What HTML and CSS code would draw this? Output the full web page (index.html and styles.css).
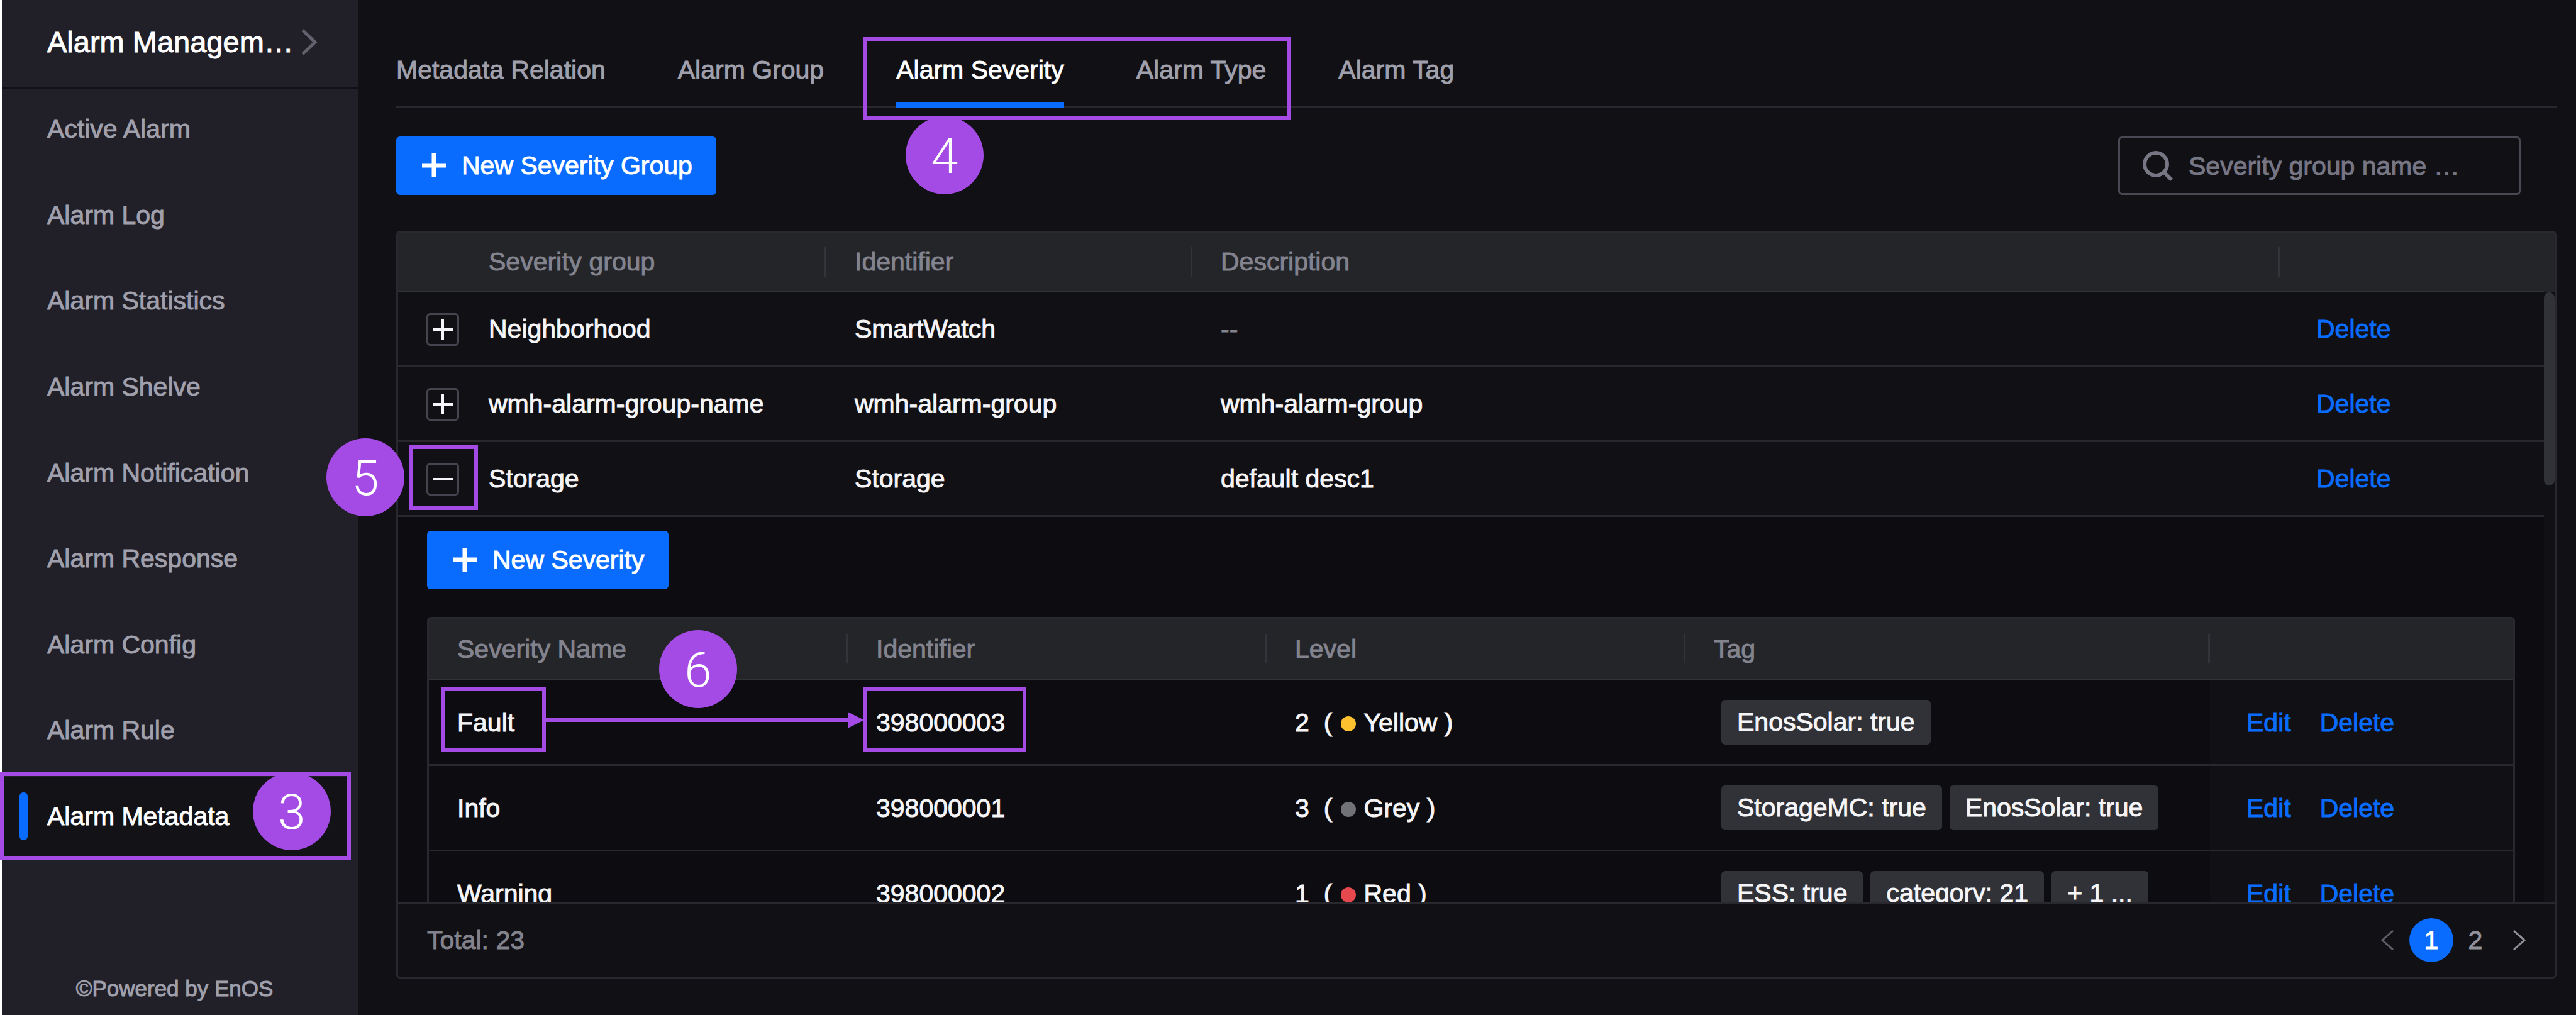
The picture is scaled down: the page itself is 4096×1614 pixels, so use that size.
FILE: index.html
```html
<!DOCTYPE html>
<html lang="en">
<head>
<meta charset="utf-8">
<meta name="viewport" content="width=device-width, initial-scale=1.0">
<title>Alarm Metadata - Alarm Management</title>
<link rel="stylesheet" href="styles.css">
</head>
<body>
<aside class="sidebar">
  <div class="sidebar-title">
    <span>Alarm Managem…</span>
    <svg class="title-arrow" viewBox="0 0 26 42"><path d="M2 2 L22 21 L2 40"/></svg>
  </div>
  <nav class="menu">
    <a href="#">Active Alarm</a>
    <a href="#">Alarm Log</a>
    <a href="#">Alarm Statistics</a>
    <a href="#">Alarm Shelve</a>
    <a href="#">Alarm Notification</a>
    <a href="#">Alarm Response</a>
    <a href="#">Alarm Config</a>
    <a href="#">Alarm Rule</a>
    <a href="#" class="active">Alarm Metadata</a>
  </nav>
  <p class="powered">©Powered by EnOS</p>
</aside>

<main class="content">
  <nav class="tabs">
    <a href="#">Metadata Relation</a>
    <a href="#">Alarm Group</a>
    <a href="#" class="active">Alarm Severity</a>
    <a href="#">Alarm Type</a>
    <a href="#">Alarm Tag</a>
  </nav>

  <div class="toolbar">
    <button class="btn" type="button">
      <svg class="plus" viewBox="0 0 38 38"><path d="M19 0 V38 M0 19 H38"/></svg>
      New Severity Group
    </button>
    <label class="search">
      <svg class="search-icon" viewBox="0 0 48 48"><circle cx="21" cy="21" r="18"/><path d="M34 34 L46 46"/></svg>
      <input type="text" placeholder="Severity group name …" aria-label="Severity group name">
    </label>
  </div>

  <section class="card">
    <div class="card-head">
      <table class="grid groups">
        <colgroup><col class="c-expand"><col class="c-group"><col class="c-ident"><col><col class="c-ops"></colgroup>
        <thead>
          <tr><th></th><th class="split">Severity group</th><th class="split">Identifier</th><th class="split">Description</th><th></th></tr>
        </thead>
      </table>
    </div>
    <div class="card-body">
      <table class="grid groups">
        <colgroup><col class="c-expand"><col class="c-group"><col class="c-ident"><col><col class="c-ops"></colgroup>
        <tbody>
          <tr>
            <td><button class="expand" type="button" aria-label="Expand"><svg viewBox="0 0 32 32"><path d="M16 0 V32 M0 16 H32"/></svg></button></td>
            <td>Neighborhood</td>
            <td>SmartWatch</td>
            <td class="empty">--</td>
            <td class="ops"><a href="#">Delete</a></td>
          </tr>
          <tr>
            <td><button class="expand" type="button" aria-label="Expand"><svg viewBox="0 0 32 32"><path d="M16 0 V32 M0 16 H32"/></svg></button></td>
            <td>wmh-alarm-group-name</td>
            <td>wmh-alarm-group</td>
            <td>wmh-alarm-group</td>
            <td class="ops"><a href="#">Delete</a></td>
          </tr>
          <tr>
            <td><button class="expand" type="button" aria-label="Collapse"><svg viewBox="0 0 32 32"><path d="M0 16 H32"/></svg></button></td>
            <td>Storage</td>
            <td>Storage</td>
            <td>default desc1</td>
            <td class="ops"><a href="#">Delete</a></td>
          </tr>
          <tr>
            <td colspan="5" class="detail">
              <button class="btn" type="button">
                <svg class="plus" viewBox="0 0 38 38"><path d="M19 0 V38 M0 19 H38"/></svg>
                New Severity
              </button>
              <table class="grid severities">
                <colgroup><col><col><col><col class="c-tag"><col class="c-edit"></colgroup>
                <thead>
                  <tr><th class="split">Severity Name</th><th class="split">Identifier</th><th class="split">Level</th><th class="split">Tag</th><th></th></tr>
                </thead>
                <tbody>
                  <tr>
                    <td>Fault</td>
                    <td>398000003</td>
                    <td><span class="level">2</span>(<i class="dot yellow"></i>Yellow )</td>
                    <td><div class="tags"><span>EnosSolar: true</span></div></td>
                    <td class="ops"><a href="#">Edit</a><a href="#">Delete</a></td>
                  </tr>
                  <tr>
                    <td>Info</td>
                    <td>398000001</td>
                    <td><span class="level">3</span>(<i class="dot grey"></i>Grey )</td>
                    <td><div class="tags"><span>StorageMC: true</span><span>EnosSolar: true</span></div></td>
                    <td class="ops"><a href="#">Edit</a><a href="#">Delete</a></td>
                  </tr>
                  <tr>
                    <td>Warning</td>
                    <td>398000002</td>
                    <td><span class="level">1</span>(<i class="dot red"></i>Red )</td>
                    <td><div class="tags"><span>ESS: true</span><span>category: 21</span><span>+ 1 ...</span></div></td>
                    <td class="ops"><a href="#">Edit</a><a href="#">Delete</a></td>
                  </tr>
                </tbody>
              </table>
            </td>
          </tr>
        </tbody>
      </table>
      <div class="scrollbar"></div>
    </div>
    <div class="card-foot">
      <span>Total: 23</span>
      <div class="pager">
        <button type="button" class="prev" aria-label="Previous page"><svg viewBox="0 0 20 32"><path d="M19 1 L2 16 L19 31"/></svg></button>
        <button type="button" class="current">1</button>
        <button type="button">2</button>
        <button type="button" aria-label="Next page"><svg viewBox="0 0 20 32"><path d="M1 1 L18 16 L1 31"/></svg></button>
      </div>
    </div>
  </section>
</main>

<!-- step markers on top of the page -->
<div class="steps">
  <div class="frame frame-menu"></div>
  <div class="frame frame-tabs"></div>
  <div class="frame frame-expand"></div>
  <div class="frame frame-name"></div>
  <div class="frame frame-ident"></div>
  <svg class="arrow" viewBox="0 0 508 26"><path d="M0 10 H482 V0 L508 13 L482 26 V16 H0 Z"/></svg>
  <span class="step step-3">3</span>
  <span class="step step-4">4</span>
  <span class="step step-5">5</span>
  <span class="step step-6">6</span>
</div>
</body>
</html>
```
FILE: styles.css
```css
* {
  box-sizing: border-box;
}

body {
  margin: 0;
  height: 100vh;
  display: flex;
  position: relative;
  overflow: hidden;
  background: #111014;
  color: #f5f5f7;
  font-family: "Liberation Sans", Arial, sans-serif;
  font-size: 41px;
  line-height: 48px;
  -webkit-text-stroke: 1px;
}

a {
  color: #0a6cff;
  text-decoration: none;
}

button,
input {
  font: inherit;
  color: inherit;
}

svg {
  display: block;
  fill: none;
  stroke: currentColor;
}

/* sidebar */
.sidebar {
  width: 569px;
  flex: none;
  display: flex;
  flex-direction: column;
  background: #211f28;
  border-left: 3px solid #fff;
}

.sidebar-title {
  height: 142px;
  padding: 0 64px 6px 72px;
  display: flex;
  align-items: center;
  justify-content: space-between;
  border-bottom: 3px solid #111014;
  color: #fff;
  font-size: 47px;
}

.title-arrow {
  width: 26px;
  height: 42px;
  stroke-width: 5;
  color: #62616d;
}

.menu {
  display: flex;
  flex-direction: column;
  justify-content: space-between;
  flex: 1;
}

.menu a {
  display: flex;
  align-items: center;
  height: 126px;
  margin-right: 14px;
  padding-left: 72px;
  color: #a0a0ac;
}

.menu a.active {
  padding-left: 28px;
  gap: 31px;
  background: #131217;
  color: #fff;
}

.menu a.active::before {
  content: "";
  width: 13px;
  height: 76px;
  border-radius: 6px;
  background: #0a6cff;
}

.powered {
  height: 253px;
  margin: 0;
  padding: 187px 17px 0 0;
  text-align: center;
  font-size: 35px;
  color: #a0a0ac;
}

/* content */
.content {
  flex: 1;
  min-width: 0;
  display: flex;
  flex-direction: column;
  padding: 0 31px 58px 61px;
}

.tabs {
  display: flex;
  gap: 115px;
  height: 171px;
  border-bottom: 3px solid #28282e;
}

.tabs a {
  height: 171px;
  padding-top: 87px;
  color: #a0a0ac;
}

.tabs a.active {
  color: #fff;
  border-bottom: 9px solid #0a6cff;
}

.toolbar {
  display: flex;
  justify-content: space-between;
  padding: 46px 57px 57px 0;
}

.btn {
  display: flex;
  align-items: center;
  gap: 25px;
  height: 93px;
  padding: 0 38px 2px 41px;
  border: 0;
  border-radius: 6px;
  background: #0a6cff;
  color: #fff;
}

.plus {
  width: 38px;
  height: 38px;
  stroke-width: 7;
}

.search {
  display: flex;
  align-items: center;
  gap: 25px;
  width: 640px;
  height: 93px;
  padding: 0 36px;
  border: 3px solid #4a4953;
  border-radius: 6px;
  color: #777684;
}

.search-icon {
  width: 48px;
  height: 48px;
  flex: none;
  stroke-width: 6;
}

.search input {
  flex: 1;
  min-width: 0;
  padding: 0;
  border: 0;
  outline: 0;
  background: none;
}

.search input::placeholder {
  color: #777684;
  opacity: 1;
}

/* table card */
.card {
  flex: 1;
  min-height: 0;
  display: flex;
  flex-direction: column;
  border: 3px solid #28282e;
  border-radius: 6px;
}

.card-head {
  padding-right: 17px;
  background: #242529;
}

.card-body {
  flex: 1;
  min-height: 0;
  padding-right: 17px;
  position: relative;
  overflow: hidden;
}

.scrollbar {
  position: absolute;
  top: 0;
  right: 0;
  width: 17px;
  height: 307px;
  border-radius: 9px;
  background: #313237;
}

.grid {
  width: 100%;
  table-layout: fixed;
  border-collapse: separate;
  border-spacing: 0;
}

.grid th,
.grid td {
  padding: 0 45px;
  text-align: left;
  font-weight: 400;
  white-space: nowrap;
  border-bottom: 3px solid #28282e;
}

.grid th {
  height: 95px;
  background: #242529;
  color: #83838e;
  border-bottom-color: #313238;
}

.grid th.split {
  background: linear-gradient(#33343a, #33343a) right center / 3px 47px no-repeat #242529;
}

.grid td {
  height: 119px;
}

.grid .empty {
  color: #83838e;
}

.grid .ops {
  padding: 0 58px;
}

.ops a + a {
  margin-left: 46px;
}

.groups .c-expand {
  width: 99px;
}

.groups .c-group,
.groups .c-ident {
  width: 582px;
}

.groups .c-ops {
  width: 420px;
}

.expand {
  display: flex;
  align-items: center;
  justify-content: center;
  width: 52px;
  height: 52px;
  padding: 0;
  border: 3px solid #46454f;
  border-radius: 6px;
  background: none;
}

.expand svg {
  width: 32px;
  height: 32px;
  stroke-width: 4;
}

.groups td:has(.expand) {
  padding: 2px 0 0 45px;
}

/* expanded row */
.grid .detail {
  padding: 22px 46px 46px;
  background: #0d0c10;
}

.severities {
  margin-top: 44px;
  border: 3px solid #28282e;
  border-radius: 6px;
}

.grid.severities th {
  height: 98px;
}

.grid.severities td {
  height: 136px;
}

.severities .c-tag {
  width: 834px;
}

.severities .c-edit {
  width: 482px;
}

.severities .ops {
  background: #111014;
}

.level {
  margin-right: 23px;
}

.dot {
  display: inline-block;
  width: 24px;
  height: 24px;
  margin: 0 12px 0 14px;
  border-radius: 50%;
}

.yellow {
  background: #fdc12f;
}

.grey {
  background: #707277;
}

.red {
  background: #e5484d;
}

.tags {
  display: flex;
  gap: 12px;
  padding-left: 12px;
}

.tags span {
  height: 71px;
  padding: 0 25px;
  border-radius: 6px;
  background: #313237;
  line-height: 70px;
}

/* footer */
.card-foot {
  display: flex;
  align-items: center;
  justify-content: space-between;
  height: 119px;
  padding: 0 21px 0 46px;
  border-top: 3px solid #28282e;
  color: #83838e;
}

.pager {
  display: flex;
}

.pager button {
  display: flex;
  align-items: center;
  justify-content: center;
  width: 70px;
  height: 70px;
  padding: 0;
  border: 0;
  border-radius: 50%;
  background: none;
  color: #92929d;
}

.pager .current {
  background: #0a6cff;
  color: #fff;
}

.pager .prev {
  color: #5f5e69;
}

.pager svg {
  width: 20px;
  height: 32px;
  stroke-width: 3;
}

/* step markers */
.frame,
.step,
.arrow {
  position: absolute;
}

.frame {
  border: 6px solid #a44be6;
}

.frame-menu {
  left: 0;
  top: 1228px;
  width: 558px;
  height: 139px;
}

.frame-tabs {
  left: 1372px;
  top: 59px;
  width: 681px;
  height: 132px;
}

.frame-expand {
  left: 650px;
  top: 708px;
  width: 110px;
  height: 103px;
}

.frame-name {
  left: 702px;
  top: 1093px;
  width: 166px;
  height: 103px;
}

.frame-ident {
  left: 1372px;
  top: 1093px;
  width: 260px;
  height: 103px;
}

.arrow {
  left: 866px;
  top: 1132px;
  width: 508px;
  height: 26px;
  fill: #a44be6;
  stroke: none;
}

.step {
  width: 124px;
  height: 124px;
  border-radius: 50%;
  background: #a44be6;
  color: #fff;
  font-family: Roboto, sans-serif;
  font-weight: 300;
  font-size: 78px;
  line-height: 128px;
  text-align: center;
  -webkit-text-stroke: 0;
}

.step-3 {
  left: 402px;
  top: 1228px;
}

.step-4 {
  left: 1440px;
  top: 185px;
}

.step-5 {
  left: 519px;
  top: 697px;
}

.step-6 {
  left: 1048px;
  top: 1002px;
}
```
